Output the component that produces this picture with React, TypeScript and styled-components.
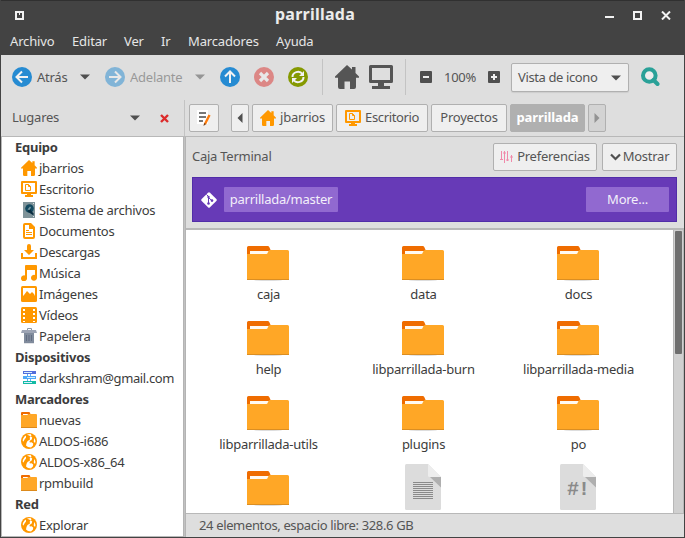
import React from "react";
import styled, { createGlobalStyle, css } from "styled-components";

const GlobalStyle = createGlobalStyle`
  * { box-sizing: border-box; }
  html, body { margin: 0; padding: 0; overflow: hidden; }
  body { font: 13px/20px "Noto Sans", sans-serif; letter-spacing: -0.25px; color: #3c3c3c; }
  svg { display: block; flex: none; }
`;

const line = "#b8b8b8";
const orange = "#ff9800";

const Window = styled.div`
  width: 685px;
  height: 538px;
  display: flex;
  flex-direction: column;
  background: #dedede;
  border: 1px solid #434343;
  border-top: 0;
`;

const Header = styled.header`
  height: 55px;
  flex: none;
  background: #434343;
  border-top: 1px solid #303030;
  color: #e6e6e6;
`;

const TitleBar = styled.div`
  height: 28px;
  display: grid;
  grid-template-columns: 24px 1fr 80px;
  align-items: center;
  padding: 0 13px 0 14px;
`;

const Title = styled.h1`
  margin: -2px 0 0;
  text-align: center;
  font: bold 16px/22px "Noto Sans", sans-serif;
  letter-spacing: 0.25px;
  color: #ececec;
`;

const WindowButtons = styled.div`
  display: flex;
  justify-content: flex-end;
  gap: 19px;
`;

const MenuBar = styled.nav`
  display: flex;
  height: 24px;
  align-items: center;
  padding-left: 9px;
  letter-spacing: -0.15px;
`;

const MenuItem = styled.span<{ $w: number }>`
  width: ${(p) => p.$w}px;
  white-space: nowrap;
`;

const Toolbar = styled.div`
  height: 45px;
  flex: none;
  display: flex;
  align-items: center;
  padding: 0 0 1px 11px;
  color: #555;
`;

const Slot = styled.div<{ $w: number; $faded?: boolean }>`
  width: ${(p) => p.$w}px;
  flex: none;
  white-space: nowrap;
  display: flex;
  align-items: center;
  opacity: ${(p) => (p.$faded ? 0.5 : 1)};
`;

const Caption = styled.span<{ $tight?: boolean }>`
  margin-top: -2px;
  letter-spacing: ${(p) => (p.$tight ? "-0.38px" : "inherit")};
`;

const Divider = styled.div`
  width: 1px;
  height: 36px;
  background: #c3c3c3;
`;

const button = css`
  display: flex;
  align-items: center;
  background: #efefef;
  border: 1px solid #b0b0b0;
  border-radius: 2px;
  color: #555;
  white-space: nowrap;
`;

const Combo = styled.div`
  ${button}
  width: 118px;
  height: 29px;
  margin-top: 1px;
  padding: 0 7px 0 6px;
  justify-content: space-between;
  box-shadow: 0 1px 1px rgba(0, 0, 0, 0.08);
`;

const LocationRow = styled.div`
  height: 37px;
  flex: none;
  display: flex;
  border-bottom: 1px solid ${line};
`;

const PaneHeader = styled.div`
  width: 184px;
  display: flex;
  align-items: center;
  padding-left: 11px;
  color: #555;
  border-right: 1px solid #c3c3c3;
`;

const PathBar = styled.div`
  display: flex;
  align-items: flex-start;
  padding: 4px 0 0 4px;
  gap: 3px;
`;

const PathButton = styled.div<{ $w: number; $active?: boolean; $dim?: boolean; $gapAfter?: number }>`
  ${button}
  width: ${(p) => p.$w}px;
  height: 28px;
  justify-content: center;
  gap: 4px;
  margin-right: ${(p) => p.$gapAfter ?? 0}px;
  ${(p) => p.$active && css`
    background: #b0b0b0;
    color: #fff;
    font-weight: bold;
    letter-spacing: -0.1px;
  `}
  ${(p) => p.$dim && css`background: #d3d3d3;`}
`;

const Body = styled.div`
  flex: 1;
  min-height: 0;
  display: flex;
`;

const Sidebar = styled.aside`
  width: 182px;
  background: #fff;
  border-left: 1px solid ${line};
  border-bottom: 1px solid ${line};
  overflow: hidden;
`;

const Splitter = styled.div`
  width: 3px;
  background: #c2c2c2;
  border-left: 1px solid #b4b4b4;
  border-right: 1px solid #b4b4b4;
`;

const Place = styled.div<{ $heading?: boolean; $tight?: boolean }>`
  height: 21px;
  padding-bottom: 1px;
  display: flex;
  align-items: center;
  white-space: nowrap;
  padding-left: ${(p) => (p.$heading ? 13 : 19)}px;
  gap: 2px;
  font-weight: ${(p) => (p.$heading ? "bold" : "normal")};
  letter-spacing: ${(p) => (p.$tight ? "-0.36px" : "-0.25px")};
`;

const Main = styled.main`
  flex: 1;
  min-width: 0;
  display: flex;
  flex-direction: column;
`;

const TerminalPane = styled.section`
  height: 93px;
  flex: none;
  padding: 6px 7px 0 6px;
  border-bottom: 2px solid ${line};
`;

const PaneRow = styled.div`
  height: 28px;
  display: flex;
  align-items: center;
  gap: 5px;
  color: #555;
`;

const PaneTitle = styled(Caption)`
  flex: 1;
`;

const PaneButton = styled.div<{ $w: number; $gap: number }>`
  ${button}
  width: ${(p) => p.$w}px;
  height: 28px;
  justify-content: center;
  gap: ${(p) => p.$gap}px;
`;

const GitBar = styled.div`
  margin-top: 6px;
  height: 45px;
  display: flex;
  align-items: center;
  justify-content: space-between;
  padding: 0 7px 0 8px;
  background: #673ab7;
  border: 1px solid #512da8;
`;

const GitGroup = styled.div`
  display: flex;
  align-items: center;
  gap: 7px;
`;

const Chip = styled.span<{ $w: number }>`
  width: ${(p) => p.$w}px;
  height: 25px;
  line-height: 24px;
  text-align: center;
  background: #9169d0;
  color: #f3effa;
  border-radius: 1px;
`;

const Files = styled.section`
  height: 283px;
  flex: none;
  display: flex;
  background: #fff;
`;

const Grid = styled.div`
  flex: 1;
  overflow: hidden;
  display: grid;
  grid-template-columns: repeat(3, 155px);
  grid-auto-rows: 75px;
  padding: 9px 0 0 5px;
`;

const File = styled.div`
  display: flex;
  flex-direction: column;
  align-items: center;
  justify-content: flex-start;
`;

const FileArt = styled.div`
  height: 45px;
  display: flex;
  align-items: flex-start;
  margin-right: 1px;
`;

const ScrollTrack = styled.div`
  width: 11px;
  padding: 1px 1px 0 1px;
  background: #d0d0d0;
  border-left: 1px solid ${line};
  border-right: 1px solid ${line};
`;

const ScrollThumb = styled.div`
  width: 7px;
  height: 123px;
  background: #6e6e6e;
  border-radius: 1px;
`;

const StatusBar = styled.footer`
  flex: 1;
  border-top: 1px solid ${line};
  padding: 1px 0 0 13px;
  color: #555;
  letter-spacing: -0.36px;
`;

const Caret = ({ color = "#4f4f4f" }: { color?: string }) => (
  <svg width="10" height="6" viewBox="0 0 10 6"><path d="M0 .5h10L5 5.5z" fill={color} /></svg>
);

const Arrow = ({ left, color = "#4f4f4f" }: { left?: boolean; color?: string }) => (
  <svg width="6" height="10" viewBox="0 0 6 10"><path d={left ? "M5.5 0v10L.5 5z" : "M.5 0v10l5-5z"} fill={color} /></svg>
);

const Disc = ({ color, children }: { color: string; children: React.ReactNode }) => (
  <svg width="20" height="20" viewBox="0 0 20 20">
    <circle cx="10" cy="10" r="10" fill={color} />
    <g fill="none" stroke="#f2f2f2" strokeWidth="2">{children}</g>
  </svg>
);

const House = ({ size, color = orange }: { size: number; color?: string }) => (
  <svg width={size} height={size} viewBox="0 0 24 24">
    <path d="M12 0l5 4.6V2h3.5v6L24 11.5v1.3h-3V22q0 2-2 2h-4v-7.5H9.5V24H5q-2 0-2-2v-9.200H0v-1.300z" fill={color} />
  </svg>
);

const Desktop = () => (
  <svg width="16" height="16" viewBox="0 0 16 16">
    <path d="M1 1h14v11H1z" fill="none" stroke={orange} strokeWidth="2" strokeLinejoin="round" />
    <path d="M6 12h4v2h2v2H4v-2h2z" fill={orange} />
    <path d="M4.500 3.500h3L9.500 5.500v4h-5zM7.500 3.500v2h2" fill="none" stroke={orange} />
  </svg>
);

const Disk = () => (
  <svg width="16" height="16" viewBox="0 0 16 16">
    <path d="M2 0h12v16H2z" fill="#7f9399" />
    <path d="M12 1h1v1h-1zM12 14h1v1h-1z" fill="#dce5e8" />
    <circle cx="8.500" cy="6.500" r="4.300" fill="#134a60" />
    <path d="M8.500 6.500l4 5v2l-6-4z" fill="#092d40" />
    <path d="M6.500 7.500l2.500-3 1 1-1.500 2.500z" fill="#789ba5" />
  </svg>
);

const DocumentIcon = () => (
  <svg width="16" height="16" viewBox="0 0 16 16">
    <path d="M5 7.500h3M5 9.500h6M5 11.500h6" fill="none" stroke={orange} />
    <path d="M4 0h6l4 4v10q0 2-2 2H4q-2 0-2-2V2q0-2 2-2zm0 2v12h8V6H8V2z" fill={orange} fillRule="evenodd" />
  </svg>
);

const Download = () => (
  <svg width="16" height="16" viewBox="0 0 16 16">
    <path d="M6 2q0-2 2-2t2 2v4h3l-5 5-5-5h3zM0 9h2v4h12V9h2v6H0z" fill={orange} />
  </svg>
);

const Music = () => (
  <svg width="16" height="16" viewBox="0 0 16 16">
    <path d="M4 1q0-1 1-1h10q1 0 1 1v11.500a3 3 0 1 1-2-2.500V5H6v8a3 3 0 1 1-2-2.500z" fill={orange} />
  </svg>
);

const Picture = () => (
  <svg width="16" height="16" viewBox="0 0 16 16">
    <rect width="16" height="16" rx="1.500" fill={orange} />
    <path d="M2 2h12v8l-1-2-2-2-2 2-1-1-2-2-3 4-1 1z" fill="#fff" />
  </svg>
);

const Film = () => (
  <svg width="16" height="16" viewBox="0 0 16 16">
    <rect width="16" height="16" rx="1.500" fill={orange} />
    <path d="M2 2h2v2H2zm0 4h2v2H2zm0 4h2v2H2zm0 4h2v1H2zM12 2h2v2h-2zm0 4h2v2h-2zm0 4h2v2h-2zm0 4h2v1h-2z" fill="#fff" />
  </svg>
);

const Trash = () => (
  <svg width="16" height="16" viewBox="0 0 16 16">
    <path d="M6.500 2V.5h4V2" fill="none" stroke="#8f99a3" />
    <path d="M1 2h14l1 3H0z" fill="#9da4b4" />
    <path d="M3 5h10v10H3z" fill="#808b9c" />
    <path d="M5 7h1v6H5zM7.500 7h1v6h-1zM10 7h1v6h-1z" fill="#626d82" />
    <path d="M3 15h10v.7H3z" fill="#d7d9dd" />
  </svg>
);

const NetworkDrive = () => (
  <svg width="16" height="16" viewBox="0 0 16 16">
    <path d="M6.500 3v10M9.500 3v10" stroke="#58aaff" />
    <path d="M2 1h13v3H2z" fill="#536edb" />
    <path d="M2 6h13v3H2z" fill="#4fa8f7" />
    <path d="M2 11h13v3H2z" fill="#13bba4" />
    <path d="M3 2.500h8M6 7.500h8M3 12.500h8" stroke="#d8efff" />
  </svg>
);

const SmallFolder = () => (
  <svg width="16" height="16" viewBox="0 0 16 16">
    <path d="M0 4V1q0-1 1-1h7.500l1 2v2z" fill="#ef6c00" />
    <path d="M2 2h5v1H2z" fill="#fff" />
    <path d="M0 3h6l1.500-1H15q1 0 1 1v12.500H0z" fill="#ffa726" />
    <path d="M0 15h16v1H0z" fill="#dc8a1c" />
  </svg>
);

const Globe = () => (
  <svg width="16" height="16" viewBox="0 0 16 16">
    <circle cx="8" cy="8" r="8" fill={orange} />
    <path d="M6 1.500L9.500 1l1 1.500-1.800 2 .3 2L6.500 8l-1 2-.5 2.500L7 14l3 .5 2-2 .2-2-1.700-1.300-1.700.3L8.500 8l2.200-1.500.5-2L10 3.500" fill="#fff" />
    <path d="M3.500 3.500L5 2.500v2l-1.500 2-1 2-.8-.5q0-2.500 1.800-4.500zM13.500 5l1 3-.5 2-1.300-1.500.3-2z" fill="#fff" />
  </svg>
);

const FolderArt = () => (
  <svg width="42" height="42" viewBox="0 -7 42 42">
    <ellipse cx="21" cy="34" rx="14" ry="1" fill="#ddd" />
    <path d="M0 8V1.500Q0 0 1.500 0H21q1 0 1.500 1.500L24 5v3z" fill="#ef6c00" />
    <path d="M3 5h20v4H3z" fill="#fffaf2" />
    <path d="M0 8h19.500q1 0 1.500-2 .6-2 2-2h17.500Q42 4 42 5.500V34H0z" fill="#ffa726" />
    <path d="M0 33h42v1H0z" fill="#db8e22" />
  </svg>
);

const Sheet = styled.div`
  position: relative;
`;

const SheetLetters = styled.span`
  position: absolute;
  left: 0;
  width: 36px;
  top: 14px;
  text-align: center;
  color: #8a8a8a;
  font: bold 20px/24px "Liberation Mono", monospace;
  letter-spacing: -1px;
`;

const PageArt = ({ script }: { script?: boolean }) => (
  <Sheet>
    <svg width="36" height="46" viewBox="0 0 36 46">
      <path d="M1.500 0H23l13 13v31.500q0 1.500-1.500 1.500h-33Q0 46 0 44.500v-43Q0 0 1.500 0z" fill="#dcdcdc" />
      <path d="M23 0l13 13H24.500Q23 13 23 11.500z" fill="#ededed" />
      <path d="M25 13h11v10.500z" fill="#afafaf" />
      {!script && <path d="M8 18.500h20M8 20.500h20M8 22.500h20M8 24.500h20M8 26.500h20M8 28.500h20M8 30.500h20M8 32.500h20M8 34.500h20" stroke="#8a8a8a" />}
    </svg>
    {script && <SheetLetters>#!</SheetLetters>}
  </Sheet>
);

const EditIcon = () => (
  <svg width="16" height="16" viewBox="0 0 16 16">
    <path d="M1 0h11v14H1z" fill="#fff" />
    <path d="M3 3h7M3 7h7M3 11h4" stroke="#777" strokeWidth="2" />
    <path d="M13.500 5L9 14" stroke="#ff7c0c" strokeWidth="2.400" />
    <path d="M7.500 16l.6-3 2 1z" fill="#774018" />
  </svg>
);

const menus: [string, number][] = [["Archivo", 62], ["Editar", 52], ["Ver", 37], ["Ir", 27], ["Marcadores", 88], ["Ayuda", 50]];

const places: [string, React.ReactNode?][] = [
  ["Equipo"],
  ["jbarrios", <House size={16} />],
  ["Escritorio", <Desktop />],
  ["Sistema de archivos", <Disk />],
  ["Documentos", <DocumentIcon />],
  ["Descargas", <Download />],
  ["Música", <Music />],
  ["Imágenes", <Picture />],
  ["Vídeos", <Film />],
  ["Papelera", <Trash />],
  ["Dispositivos"],
  ["darkshram@gmail.com", <NetworkDrive />],
  ["Marcadores"],
  ["nuevas", <SmallFolder />],
  ["ALDOS-i686", <Globe />],
  ["ALDOS-x86_64", <Globe />],
  ["rpmbuild", <SmallFolder />],
  ["Red"],
  ["Explorar", <Globe />],
];

const folders = ["caja", "data", "docs", "help", "libparrillada-burn", "libparrillada-media", "libparrillada-utils", "plugins", "po", ""];

export default function App() {
  return (
    <>
      <GlobalStyle />
      <Window>
        <Header>
          <TitleBar>
            <svg width="9" height="9" viewBox="0 0 9 9">
              <path d="M1 1h7v7H1z" fill="none" stroke="#f2f2f2" strokeWidth="2" />
              <path d="M4 2h1v2H4z" fill="#f2f2f2" />
            </svg>
            <Title>parrillada</Title>
            <WindowButtons>
              <svg width="9" height="9" viewBox="0 0 9 9"><path d="M0 6h9" stroke="#f2f2f2" strokeWidth="2" /></svg>
              <svg width="9" height="9" viewBox="0 0 9 9"><path d="M1 1h7v7H1z" fill="none" stroke="#f2f2f2" strokeWidth="2" /></svg>
              <svg width="10" height="9" viewBox="0 0 10 9"><path d="M1 .5l8 8M9 .5l-8 8" stroke="#f2f2f2" strokeWidth="2" /></svg>
            </WindowButtons>
          </TitleBar>
          <MenuBar>
            {menus.map(([name, w]) => <MenuItem key={name} $w={w}>{name}</MenuItem>)}
          </MenuBar>
        </Header>
        <Toolbar>
          <Slot $w={25}><Disc color="#268bd2"><path d="M16 10H5M10 4.500L4.500 10l5.500 5.500" /></Disc></Slot>
          <Slot $w={43}>Atrás</Slot>
          <Slot $w={25}><Caret /></Slot>
          <Slot $w={25} $faded><Disc color="#268bd2"><path d="M4 10h11M10 4.500l5.500 5.500-5.500 5.500" /></Disc></Slot>
          <Slot $w={65} $faded>Adelante</Slot>
          <Slot $w={25} $faded><Caret /></Slot>
          <Slot $w={34}><Disc color="#268bd2"><path d="M10 16V5M5 9.500l5-5 5 5" /></Disc></Slot>
          <Slot $w={34} $faded><Disc color="#dc322f"><path d="M6 6l8 8M14 6l-8 8" strokeWidth="3.200" /></Disc></Slot>
          <Slot $w={34}>
            <Disc color="#859900">
              <path d="M4.500 10a5.500 5 0 0 1 10-3M15.500 10a5.500 5 0 0 1-10 3" />
              <path d="M16 4v5h-5zM4 16v-5h5z" fill="#f2f2f2" stroke="none" />
            </Disc>
          </Slot>
          <Slot $w={13}><Divider /></Slot>
          <Slot $w={34}><House size={24} color="#555" /></Slot>
          <Slot $w={36}>
            <svg width="24" height="24" viewBox="0 0 24 24">
              <path d="M1.500 1.500h21v15h-21z" fill="none" stroke="#555" strokeWidth="3" strokeLinejoin="round" />
              <path d="M9 17h6v4h6v3H3v-3h6z" fill="#555" />
            </svg>
          </Slot>
          <Slot $w={15}><Divider /></Slot>
          <Slot $w={24}><svg width="12" height="12" viewBox="0 0 12 12"><rect width="12" height="12" rx="1" fill="#4f4f4f" /><path d="M3 6h6" stroke="#eee" strokeWidth="2" /></svg></Slot>
          <Slot $w={44}>100%</Slot>
          <Slot $w={23}><svg width="12" height="12" viewBox="0 0 12 12"><rect width="12" height="12" rx="1" fill="#4f4f4f" /><path d="M3 6h6M6 3v6" stroke="#eee" strokeWidth="2" /></svg></Slot>
          <Slot $w={130}><Combo><Caption $tight>Vista de icono</Caption><Caret /></Combo></Slot>
          <svg width="19" height="20" viewBox="0 0 19 20">
            <circle cx="8.300" cy="8.500" r="6.300" fill="#eee" stroke="#2aa198" strokeWidth="4" />
            <path d="M12.500 13l4 4" stroke="#2aa198" strokeWidth="4" strokeLinecap="round" />
          </svg>
        </Toolbar>
        <LocationRow>
          <PaneHeader>
            <Slot $w={118}><Caption>Lugares</Caption></Slot>
            <Slot $w={30}><Caret /></Slot>
            <svg width="9" height="9" viewBox="0 0 9 9"><path d="M1 1l7 7M8 1L1 8" stroke="#dc2b2b" strokeWidth="2.400" /></svg>
          </PaneHeader>
          <PathBar>
            <PathButton $w={30} $gapAfter={9}><EditIcon /></PathButton>
            <PathButton $w={18}><Arrow left /></PathButton>
            <PathButton $w={81}><House size={16} /><Caption>jbarrios</Caption></PathButton>
            <PathButton $w={92}><Desktop /><Caption $tight>Escritorio</Caption></PathButton>
            <PathButton $w={76}><Caption>Proyectos</Caption></PathButton>
            <PathButton $w={75} $active><Caption>parrillada</Caption></PathButton>
            <PathButton $w={18} $dim><Arrow color="#929292" /></PathButton>
          </PathBar>
        </LocationRow>
        <Body>
          <Sidebar>
            {places.map(([name, icon], i) => <Place key={i} $heading={!icon} $tight={name.includes("@")}>{icon}{name}</Place>)}
          </Sidebar>
          <Splitter />
          <Main>
            <TerminalPane>
              <PaneRow>
                <PaneTitle>Caja Terminal</PaneTitle>
                <PaneButton $w={104} $gap={4}>
                  <svg width="13" height="14" viewBox="0 0 13 14">
                    <path d="M1.500 1v9M4.500 1v12M7.500 1v10M11.500 5v7M0 9.500h3M3 3h3M6 10h3M10 7h3" stroke="#f08aaa" />
                  </svg>
                  <Caption>Preferencias</Caption>
                </PaneButton>
                <PaneButton $w={75} $gap={2}>
                  <svg width="11" height="8" viewBox="0 0 11 8"><path d="M1 1.500l4.500 4.500L10 1.500" fill="none" stroke="#4f4f4f" strokeWidth="2.200" /></svg>
                  <Caption>Mostrar</Caption>
                </PaneButton>
              </PaneRow>
              <GitBar>
                <GitGroup>
                  <svg width="16" height="16" viewBox="0 0 16 16">
                    <path d="M7 .7q1-1 2 0L15.300 7q1 1 0 2L9 15.300q-1 1-2 0L.7 9q-1-1 0-2z" fill="#fff" />
                    <path d="M5.500 2.500l2 2V12M7.500 5.500l3.500 3.300" fill="none" stroke="#673ab7" />
                    <circle cx="7.500" cy="5" r="1.200" fill="#673ab7" /><circle cx="7.500" cy="11.500" r="1.300" fill="#673ab7" /><circle cx="11" cy="8.600" r="1.300" fill="#673ab7" />
                  </svg>
                  <Chip $w={114}>parrillada/master</Chip>
                </GitGroup>
                <Chip $w={83}>More...</Chip>
              </GitBar>
            </TerminalPane>
            <Files>
              <Grid>
                {folders.map((name, i) => <File key={i}><FileArt><FolderArt /></FileArt>{name}</File>)}
                <File><FileArt><PageArt /></FileArt></File>
                <File><FileArt><PageArt script /></FileArt></File>
              </Grid>
              <ScrollTrack><ScrollThumb /></ScrollTrack>
            </Files>
            <StatusBar>24 elementos, espacio libre: 328.6 GB</StatusBar>
          </Main>
        </Body>
      </Window>
    </>
  );
}
